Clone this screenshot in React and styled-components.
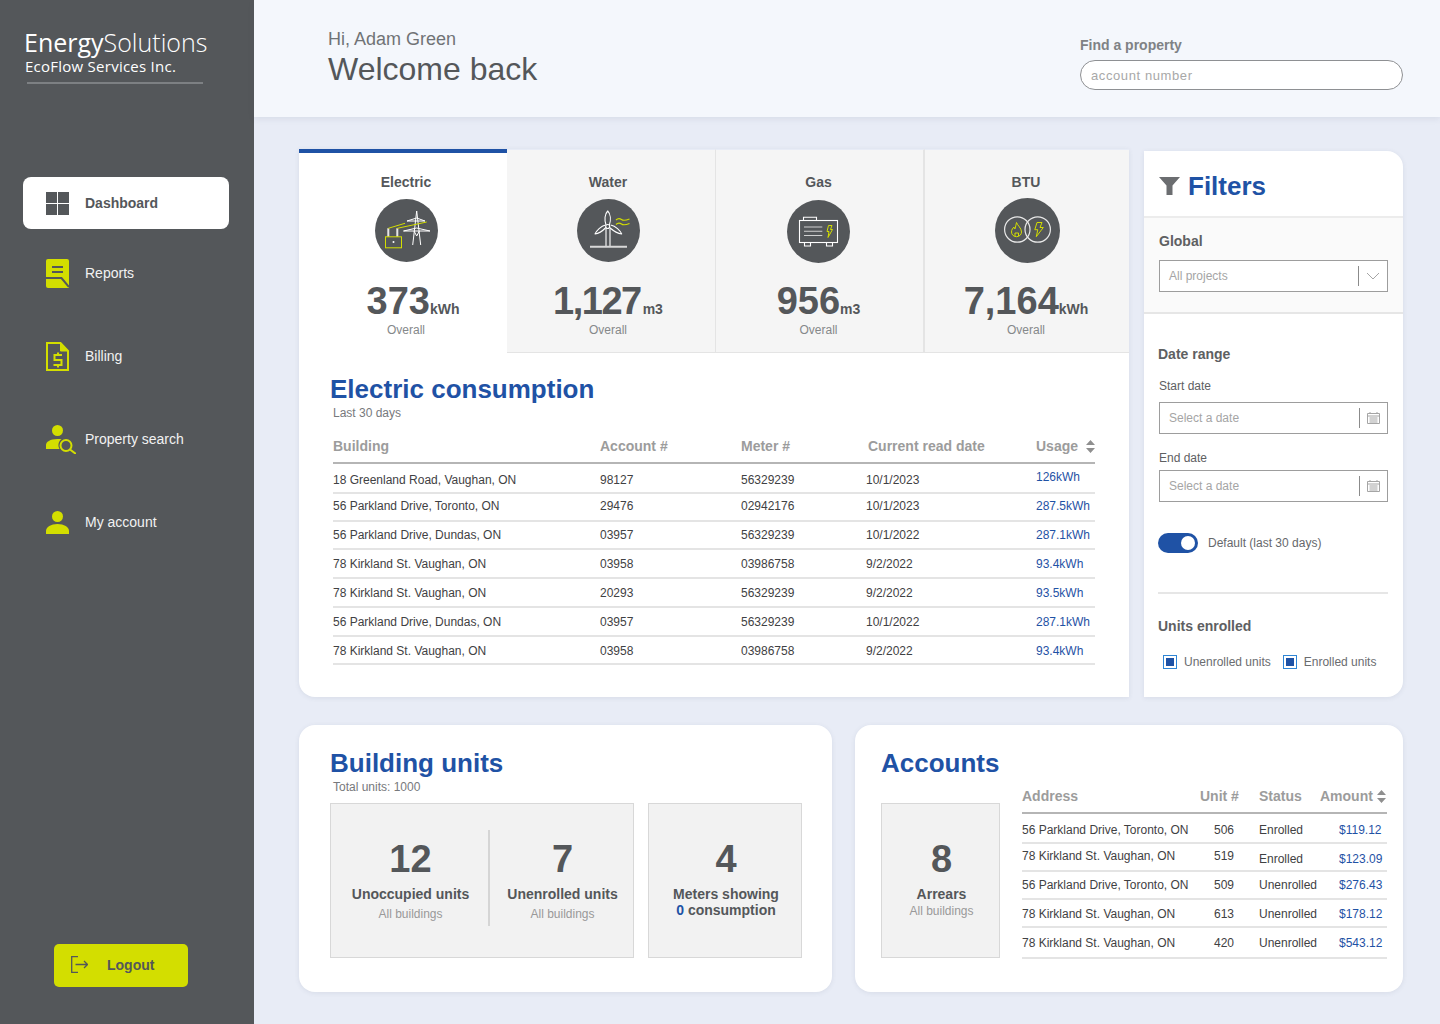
import React from 'react'
import styled, { createGlobalStyle } from 'styled-components'

const LIME = '#d3de00'
const SLATE = '#54575a'
const BLUE = '#1f52a5'

const Global = createGlobalStyle`
  html, body { margin: 0; padding: 0; }
  body { background: #e8ecf6; font-family: "Liberation Sans", Arial, sans-serif; color: ${SLATE}; }
  * { box-sizing: border-box; }
`

const Page = styled.div`
  display: flex;
  width: 1440px;
  height: 1024px;
  overflow: hidden;
`

const Sidebar = styled.aside`
  width: 254px;
  flex: none;
  background: ${SLATE};
  display: flex;
  flex-direction: column;
  padding: 27px 0 37px;
`

const Logo = styled.div`
  margin-left: 27px;
  width: 176px;
  font-family: "Open Sans", sans-serif;
  color: #fff;
  border-bottom: 2px solid #7d8083;
  height: 57px;
`

const LogoName = styled.div`
  font-size: 25px;
  line-height: 31px;
  font-weight: 300;
  white-space: nowrap;
  margin-left: -3px;
  b { font-weight: 500; }
`

const LogoSub = styled.div`
  font-size: 15px;
  letter-spacing: 0.25px;
  line-height: 17px;
  white-space: nowrap;
  margin-left: -2px;
`

const Nav = styled.nav`
  margin-top: 93px;
  display: flex;
  flex-direction: column;
`

const NavItem = styled.a`
  display: flex;
  align-items: center;
  margin-left: 23px;
  width: 206px;
  height: ${p => p.$h}px;
  padding-left: 23px;
  gap: ${p => p.$gap || 16}px;
  font-size: 14px;
  border-radius: 8px;
  color: ${p => (p.$active ? SLATE : '#f2f2f2')};
  font-weight: ${p => (p.$active ? 700 : 400)};
  background: ${p => (p.$active ? '#fff' : 'transparent')};
  margin-bottom: ${p => p.$after || 0}px;
  svg { flex: none; }
`

const Logout = styled.button`
  margin-top: auto;
  margin-left: 54px;
  width: 134px;
  height: 43px;
  border: 0;
  border-radius: 5px;
  background: ${LIME};
  color: ${SLATE};
  font: 700 14px "Liberation Sans", Arial, sans-serif;
  display: flex;
  align-items: center;
  gap: 19px;
  padding: 0 0 2px 17px;
`

const Content = styled.div`
  flex: 1;
  display: flex;
  flex-direction: column;
  min-width: 0;
`

const Header = styled.header`
  height: 117px;
  flex: none;
  background: #f4f7fc;
  box-shadow: 0 2px 6px rgba(70, 80, 110, 0.1);
  display: flex;
  justify-content: space-between;
  padding: 28px 37px 0 74px;
`

const Hello = styled.div`
  font-size: 18px;
  line-height: 22px;
  color: #707376;
`

const Welcome = styled.h1`
  margin: 0;
  font-size: 32px;
  line-height: 38px;
  font-weight: 400;
  color: ${SLATE};
`

const Finder = styled.div`
  width: 323px;
  padding-top: 9px;
`

const FinderLabel = styled.div`
  font-size: 14px;
  font-weight: 700;
  line-height: 17px;
  color: #7f8285;
  margin-bottom: 6px;
`

const FinderInput = styled.div`
  height: 30px;
  border: 1px solid #8e9093;
  border-radius: 15px;
  background: #fff;
  font-size: 13px;
  letter-spacing: 0.6px;
  line-height: 30px;
  padding-left: 10px;
  color: #a8a8a8;
`

const Main = styled.main`
  padding: 32px 37px 0 45px;
  display: flex;
  flex-direction: column;
  gap: 28px;
`

const TopRow = styled.div`
  display: flex;
  gap: 15px;
  height: 548px;
`

const Consumption = styled.section`
  width: 830px;
  background: #fff;
  border-radius: 0 0 0 16px;
  box-shadow: 0 1px 5px rgba(70, 80, 110, 0.1);
`

const Tabs = styled.div`
  display: flex;
  height: 204px;
`

const Tab = styled.div`
  width: ${p => p.$w}px;
  flex: none;
  height: 100%;
  background: ${p => (p.$active ? '#fff' : '#f5f5f5')};
  border-top: ${p => (p.$active ? `4px solid ${BLUE}` : '1px solid #e8ecf6')};
  border-right: ${p => p.$gap || 0}px solid #e4e4e4;
  border-bottom: ${p => (p.$active ? '0' : '1px solid #e4e4e4')};
  padding-top: ${p => (p.$active ? 20 : 23)}px;
  padding-left: ${p => p.$shift || 0}px;
  padding-right: ${p => p.$back || 0}px;
  display: flex;
  flex-direction: column;
  align-items: center;
`

const TabName = styled.div`
  font-size: 14px;
  line-height: 18px;
  font-weight: 700;
`

const TabIcon = styled.div`
  width: 66px;
  height: 66px;
  margin: ${p => p.$top || 6}px 0 ${p => 30 - (p.$top || 6)}px ${p => p.$nudge || 0}px;
  display: flex;
  align-items: center;
  justify-content: center;
`

const TabValue = styled.div`
  font-size: 38px;
  line-height: 28px;
  font-weight: 700;
  white-space: nowrap;
  letter-spacing: ${p => p.$tight || 0}px;
  margin-left: ${p => p.$nudge || 0}px;
  small { font-size: 14px; font-weight: 700; letter-spacing: 0; margin-left: ${p => p.$gap || 0}px; }
`

const Muted = styled.div`
  font-size: 12px;
  line-height: 14px;
  color: #85888a;
`

const Title = styled.h2`
  margin: 0;
  font-size: 26px;
  line-height: 30px;
  font-weight: 700;
  color: ${BLUE};
  white-space: nowrap;
`

const Usage = styled.div`
  padding: 21px 34px 0 31px;
`

const Sub = styled(Muted)`
  color: #77797c;
  margin-left: 3px;
  margin-top: 2px;
`

const Sheet = styled.div`
  margin: 14px 0 0 3px;
`

const HeadRow = styled.div`
  display: grid;
  grid-template-columns: ${p => p.$cols};
  height: 30px;
  padding-bottom: 4px;
  border-bottom: 2px solid #b5b5b5;
  align-items: center;
  font-size: 14px;
  font-weight: 700;
  color: #9c9c9c;
  white-space: nowrap;
`

const Row = styled.div`
  display: grid;
  grid-template-columns: ${p => p.$cols};
  height: ${p => p.$h}px;
  padding-top: ${p => p.$nudge > 0 ? p.$nudge : 0}px;
  padding-bottom: ${p => p.$nudge < 0 ? -p.$nudge : 0}px;
  border-bottom: 2px solid #e4e4e4;
  align-items: center;
  font-size: 12px;
  color: #3f4143;
  white-space: nowrap;
`

const Cell = styled.div`
  padding-left: ${p => p.$pad || 0}px;
  margin-top: ${p => p.$down || 0}px;
  margin-bottom: ${p => p.$up || 0}px;
  color: ${p => (p.$link ? BLUE : 'inherit')};
  display: flex;
  align-items: center;
  gap: ${p => p.$gap || 8}px;
`

const Filters = styled.aside`
  width: 259px;
  margin-top: 2px;
  background: #fff;
  border-radius: 0 16px 16px 0;
  box-shadow: 0 1px 5px rgba(70, 80, 110, 0.1);
  overflow: hidden;
`

const FilterHead = styled.div`
  height: 65px;
  display: flex;
  align-items: center;
  gap: 8px;
  padding: 4px 0 0 15px;
`

const GlobalBlock = styled.div`
  height: 98px;
  background: #fafafa;
  border-top: 2px solid #ececec;
  border-bottom: 2px solid #e6e6e6;
  padding: 15px 15px 0;
`

const Bold = styled.div`
  font-size: 14px;
  line-height: 17px;
  font-weight: 700;
  color: #5e6062;
`

const Field = styled.div`
  width: 229px;
  height: 32px;
  margin-top: ${p => p.$top || 0}px;
  border: 1px solid #9d9d9d;
  background: #fff;
  display: flex;
  align-items: center;
  padding-left: 9px;
  font-size: 12px;
  color: #a5a5a5;
  span { flex: 1; }
  i {
    width: 1px;
    height: 20px;
    background: #8b8b8b;
  }
  svg { margin: 0 7px; flex: none; }
`

const FilterBody = styled.div`
  padding: 32px 15px 0 14px;
`

const FieldLabel = styled.div`
  font-size: 12px;
  line-height: 14px;
  color: #5e6062;
  margin: ${p => p.$top}px 0 ${p => p.$after}px 1px;
`

const FieldBox = styled(Field)`
  margin-left: 1px;
`

const ToggleRow = styled.div`
  display: flex;
  align-items: center;
  gap: 10px;
  margin-top: 31px;
  font-size: 12px;
  color: #66686b;
`

const Toggle = styled.div`
  width: 40px;
  height: 20px;
  border-radius: 10px;
  background: ${BLUE};
  display: flex;
  justify-content: flex-end;
  align-items: center;
  padding-right: 3px;
  &::after {
    content: '';
    width: 14px;
    height: 14px;
    border-radius: 50%;
    background: #fff;
  }
`

const Rule = styled.div`
  height: 2px;
  background: #e6e6e6;
  margin: 39px 0 24px;
  width: 230px;
`

const Checks = styled.div`
  display: flex;
  gap: 12px;
  margin: 20px 0 0 5px;
`

const Check = styled.label`
  display: flex;
  align-items: center;
  gap: 7px;
  font-size: 12px;
  color: #6a6c6f;
  white-space: nowrap;
  margin-top: ${p => (p.$raised ? -1 : 0)}px;
  &::before {
    content: '';
    width: 12px;
    height: 12px;
    flex: none;
    border: 1px solid #2f86d6;
    background: ${BLUE};
    box-shadow: inset 0 0 0 2px #fff;
  }
`

const BottomRow = styled.div`
  display: flex;
  gap: 23px;
  height: 267px;
`

const Panel = styled.section`
  width: ${p => p.$w}px;
  background: #fff;
  border-radius: 16px;
  box-shadow: 0 1px 5px rgba(70, 80, 110, 0.1);
  padding: 23px ${p => p.$right}px 0 ${p => p.$left}px;
`

const Boxes = styled.div`
  display: flex;
  gap: 14px;
  margin-top: 9px;
`

const StatBox = styled.div`
  width: ${p => p.$w}px;
  height: 155px;
  flex: none;
  background: #f2f2f2;
  border: 1px solid #d8d8d8;
  display: flex;
  padding-top: 26px;
`

const Stat = styled.div`
  flex: ${p => (p.$split ? `0 0 ${p.$split}px` : 1)};
  display: flex;
  flex-direction: column;
  align-items: center;
  height: 96px;
  padding-left: 2px;
  border-right: ${p => (p.$split ? '2px solid #d5d5d5' : '0')};
  text-align: center;
`

const StatValue = styled.div`
  font-size: 38px;
  line-height: 44px;
  font-weight: 700;
  margin-top: 7px;
`

const StatName = styled.div`
  font-size: 14px;
  line-height: 16px;
  font-weight: 700;
  margin-top: 5px;
  white-space: nowrap;
  b { color: ${BLUE}; }
`

const StatHint = styled(Muted)`
  color: #999;
  margin-top: ${p => p.$top || 5}px;
`

const AccountsWrap = styled.div`
  display: flex;
  gap: 22px;
  margin-top: 6px;
`

const AccountsBox = styled(StatBox)`
  margin-top: 19px;
`

const AccountsTable = styled.div`
  width: 365px;
`

const Sort = () => (
  <svg width="9" height="13" viewBox="0 0 9 13"><path d="M4.5 0 9 5H0zM0 8h9l-4.5 5z" fill="#8f8f8f" /></svg>
)

const Dashboard = () => (
  <svg width="23" height="23" viewBox="0 0 23 23" fill={SLATE}>
    <rect width="11" height="11" /><rect x="12" width="11" height="11" />
    <rect y="12" width="11" height="11" /><rect x="12" y="12" width="11" height="11" />
  </svg>
)

const Reports = () => (
  <svg width="23" height="29" viewBox="0 0 23 29">
    <path d="M2 0h19a2 2 0 0 1 2 2v27H2a2 2 0 0 1-2-2V2a2 2 0 0 1 2-2z" fill={LIME} />
    <path d="M6 8h11M6 13h11" stroke={SLATE} strokeWidth="2" />
    <path d="M0 19h15.5L23 28" stroke={SLATE} strokeWidth="2" fill="none" />
  </svg>
)

const Billing = () => (
  <svg width="23" height="29" viewBox="0 0 23 29" fill="none" stroke={LIME} strokeWidth="2">
    <path d="M1 1h13.500L22 9v19H1z" />
    <path d="M14.500 1 22 9h-7.500z" fill={LIME} strokeWidth="1" />
    <path d="M16 13H8.500v5h7v5H7.500M12 10.500V13M12 23v2.500" />
  </svg>
)

const PropertySearch = () => (
  <svg width="30" height="29" viewBox="0 0 30 29" fill={LIME}>
    <circle cx="11.500" cy="5.500" r="5.500" />
    <path d="M0 24v-4c0-3 4-6 11.500-6 1.500 0 3 .1 4 .3-3 2-4 6-2 9.700z" />
    <circle cx="20" cy="20.500" r="5.500" fill="none" stroke={LIME} strokeWidth="2" />
    <path d="m24 24.500 6 4.500" stroke={LIME} strokeWidth="2" />
  </svg>
)

const Account = () => (
  <svg width="23" height="23" viewBox="0 0 23 23" fill={LIME}>
    <circle cx="11.500" cy="5.500" r="5.500" />
    <path d="M0 23v-3c0-4 5-7 11.500-7S23 16 23 20v3z" />
  </svg>
)

const LogoutIcon = () => (
  <svg width="17" height="17" viewBox="0 0 17 17" fill="none" stroke={SLATE} strokeWidth="1.300">
    <path d="M7 .700H.700v15.600H7M4.500 8.500h12M13 5l3.500 3.500L13 12" />
  </svg>
)

const Funnel = () => (
  <svg width="21" height="18" viewBox="0 0 21 18"><path d="M0 0h21l-7.500 8.500V18h-6V8.500z" fill="#6b6d70" /></svg>
)

const Chevron = () => (
  <svg width="14" height="8" viewBox="0 0 14 8" fill="none" stroke="#a5a5a5"><path d="M1 1l6 6 6-6" /></svg>
)

const Calendar = () => (
  <svg width="13" height="12" viewBox="0 0 13 12" fill="none" stroke="#a5a5a5">
    <path d="M.500 1.500h12v10H.500zM.500 4h12M3 0v2M10 0v2M2.500 6h8M2.500 8h8M2.500 10h8" />
  </svg>
)

const Disc = ({ size = 63, children }) => (
  <svg width={size} height={size} viewBox={`0 0 ${size} ${size}`} fill="none">
    <circle cx={size / 2} cy={size / 2} r={size / 2} fill={SLATE} />
    {children}
  </svg>
)

const ElectricIcon = () => (
  <Disc>
    <g stroke="#fff" strokeWidth="1">
      <path d="M41.700 12 37.700 46M41.700 12l4 34" />
      <path d="M32 22h18l-8.300-3zM28.500 32H55l-13.300-3z" />
      <path d="M39 32l2.700 5 2.700-5" />
    </g>
    <path d="M13.300 29.300v8.400M22.300 29.300v8.400" stroke="#e6e6e6" strokeWidth="2" />
    <g stroke={LIME} strokeWidth="1">
      <path d="M13.300 29.300 30 24.300M22.300 29.300 51.700 23" />
      <rect x="10.500" y="37.800" width="16" height="11" />
    </g>
    <circle cx="18.500" cy="43" r="1" fill="#fff" />
  </Disc>
)

const WaterIcon = () => (
  <Disc>
    <g stroke="#fff" strokeWidth="1.100" strokeLinejoin="round">
      <path d="M29 26c-1.800-5-1.300-11 1.700-14 3 3 3.300 9 1.700 14" />
      <path d="M29 28.500c-3.500 3.500-7 6-11 6.500 1.500-3.500 6-8 10.500-9" />
      <path d="M32.500 28.500c3.500 3 8 6 12.200 6.500-1.500-3.500-6-8-11-9" />
      <circle cx="30.700" cy="27.500" r="2" />
      <path d="M29 30v17M33 30v17" />
    </g>
    <path d="M13 47.700h37" stroke="#d8d8d8" strokeWidth="2" />
    <path d="M39 21c2-2 3.500-2 5.500-.500s4 1 8-.500M39 25.500c2-2 3.500-2 5.500-.500s4 1 8-.500" stroke={LIME} strokeWidth="1.200" />
  </Disc>
)

const GasIcon = () => (
  <Disc>
    <g stroke="#fff" strokeWidth="1.100">
      <rect x="12.500" y="20.500" width="38" height="22" />
      <path d="M16.500 20.500V17.200h13v3.300M17.500 42.500V46h6v-3.500M39.500 42.500V46h6v-3.500" />
      <path d="M17 27h18.300M17 31.300h18.300M17 35.500h18.300" stroke="#d0d0d0" />
    </g>
    <path d="M41.500 25.500h3.500l-1.500 4h2L41 37.500l1-6h-2z" stroke={LIME} />
  </Disc>
)

const BtuIcon = () => (
  <Disc size={65}>
    <g stroke="#e8e8e8" strokeWidth="1.200">
      <circle cx="22.300" cy="31.500" r="12.700" />
      <circle cx="42.700" cy="31.500" r="12.700" />
    </g>
    <path d="M21.500 24.500c1 3 5 5.500 5 9.500 0 2.500-2 4.700-5 4.700s-5-2.200-5-4.700c0-2.500 1.500-4 2.500-5 0 1 .300 1.800 1 2 .500-2 1-4.500 1.500-6.500z" stroke={LIME} />
    <path d="M20 38.500v-3.500h3.500v3" stroke={LIME} />
    <path d="M42 24.500h5l-2 5h3.300l-7 9.200 1.500-7h-3z" stroke={LIME} />
  </Disc>
)

const usageCols = '267px 141px 125px 170px 1fr'
const accountCols = '178px 59px 61px 1fr'

// last two fields: row height, shift of the row's text
const usageRows = [
  ['18 Greenland Road, Vaughan, ON', '98127', '56329239', '10/1/2023', '126kWh', 30, 4],
  ['56 Parkland Drive, Toronto, ON', '29476', '02942176', '10/1/2023', '287.5kWh', 28, -2],
  ['56 Parkland Drive, Dundas, ON', '03957', '56329239', '10/1/2022', '287.1kWh', 28, 0],
  ['78 Kirkland St. Vaughan, ON', '03958', '03986758', '9/2/2022', '93.4kWh', 29, 0],
  ['78 Kirkland St. Vaughan, ON', '20293', '56329239', '9/2/2022', '93.5kWh', 29, 0],
  ['56 Parkland Drive, Dundas, ON', '03957', '56329239', '10/1/2022', '287.1kWh', 29, 0],
  ['78 Kirkland St. Vaughan, ON', '03958', '03986758', '9/2/2022', '93.4kWh', 28, 2],
]

const accountRows = [
  ['56 Parkland Drive, Toronto, ON', '506', 'Enrolled', '$119.12', 30, 4],
  ['78 Kirkland St. Vaughan, ON', '519', 'Enrolled', '$123.09', 28, 0],
  ['56 Parkland Drive, Toronto, ON', '509', 'Unenrolled', '$276.43', 28, 0],
  ['78 Kirkland St. Vaughan, ON', '613', 'Unenrolled', '$178.12', 28, 2],
  ['78 Kirkland St. Vaughan, ON', '420', 'Unenrolled', '$543.12', 31, 0],
]

export default function App() {
  return (
    <Page>
      <Global />
      <Sidebar>
        <Logo>
          <LogoName><b>Energy</b>Solutions</LogoName>
          <LogoSub>EcoFlow Services Inc.</LogoSub>
        </Logo>
        <Nav>
          <NavItem $active $h={52} $after={22}><Dashboard />Dashboard</NavItem>
          <NavItem $h={44} $after={39}><Reports />Reports</NavItem>
          <NavItem $h={44} $after={39}><Billing />Billing</NavItem>
          <NavItem $h={44} $after={39} $gap={9}><PropertySearch />Property search</NavItem>
          <NavItem $h={44}><Account />My account</NavItem>
        </Nav>
        <Logout><LogoutIcon />Logout</Logout>
      </Sidebar>

      <Content>
        <Header>
          <div>
            <Hello>Hi, Adam Green</Hello>
            <Welcome>Welcome back</Welcome>
          </div>
          <Finder>
            <FinderLabel>Find a property</FinderLabel>
            <FinderInput>account number</FinderInput>
          </Finder>
        </Header>

        <Main>
          <TopRow>
            <Consumption>
              <Tabs>
                <Tab $active $w={208} $shift={6}>
                  <TabName>Electric</TabName>
                  <TabIcon><ElectricIcon /></TabIcon>
                  <TabValue $nudge={14}>373<small>kWh</small></TabValue>
                  <Muted>Overall</Muted>
                </Tab>
                <Tab $w={209} $gap={1} $back={6}>
                  <TabName>Water</TabName>
                  <TabIcon><WaterIcon /></TabIcon>
                  <TabValue $tight={-1.5} $gap={2}>1,127<small>m3</small></TabValue>
                  <Muted>Overall</Muted>
                </Tab>
                <Tab $w={209} $gap={2} $back={2}>
                  <TabName>Gas</TabName>
                  <TabIcon $top={7}><GasIcon /></TabIcon>
                  <TabValue>956<small>m3</small></TabValue>
                  <Muted>Overall</Muted>
                </Tab>
                <Tab $w={204} $back={2}>
                  <TabName>BTU</TabName>
                  <TabIcon $nudge={3}><BtuIcon /></TabIcon>
                  <TabValue>7,164<small>kWh</small></TabValue>
                  <Muted>Overall</Muted>
                </Tab>
              </Tabs>
              <Usage>
                <Title>Electric consumption</Title>
                <Sub>Last 30 days</Sub>
                <Sheet>
                  <HeadRow $cols={usageCols}>
                    <Cell>Building</Cell>
                    <Cell>Account #</Cell>
                    <Cell>Meter #</Cell>
                    <Cell $pad={2}>Current read date</Cell>
                    <Cell>Usage <Sort /></Cell>
                  </HeadRow>
                  {usageRows.map((r, i) => (
                    <Row key={i} $cols={usageCols} $h={r[5]} $nudge={r[6]}>
                      <Cell>{r[0]}</Cell>
                      <Cell>{r[1]}</Cell>
                      <Cell>{r[2]}</Cell>
                      <Cell>{r[3]}</Cell>
                      <Cell $link $up={i === 0 ? 6 : 0}>{r[4]}</Cell>
                    </Row>
                  ))}
                </Sheet>
              </Usage>
            </Consumption>

            <Filters>
              <FilterHead><Funnel /><Title>Filters</Title></FilterHead>
              <GlobalBlock>
                <Bold>Global</Bold>
                <Field $top={10}>
                  <span>All projects</span><i /><Chevron />
                </Field>
              </GlobalBlock>
              <FilterBody>
                <Bold>Date range</Bold>
                <FieldLabel $top={16} $after={9}>Start date</FieldLabel>
                <FieldBox><span>Select a date</span><i /><Calendar /></FieldBox>
                <FieldLabel $top={17} $after={5}>End date</FieldLabel>
                <FieldBox><span>Select a date</span><i /><Calendar /></FieldBox>
                <ToggleRow><Toggle />Default (last 30 days)</ToggleRow>
                <Rule />
                <Bold>Units enrolled</Bold>
                <Checks>
                  <Check>Unenrolled units</Check>
                  <Check $raised>Enrolled units</Check>
                </Checks>
              </FilterBody>
            </Filters>
          </TopRow>

          <BottomRow>
            <Panel $w={533} $left={31} $right={30}>
              <Title>Building units</Title>
              <Sub>Total units: 1000</Sub>
              <Boxes>
                <StatBox $w={304}>
                  <Stat $split={159}>
                    <StatValue>12</StatValue>
                    <StatName>Unoccupied units</StatName>
                    <StatHint>All buildings</StatHint>
                  </Stat>
                  <Stat>
                    <StatValue>7</StatValue>
                    <StatName>Unenrolled units</StatName>
                    <StatHint>All buildings</StatHint>
                  </Stat>
                </StatBox>
                <StatBox $w={154}>
                  <Stat>
                    <StatValue>4</StatValue>
                    <StatName>Meters showing<br /><b>0</b> consumption</StatName>
                  </Stat>
                </StatBox>
              </Boxes>
            </Panel>

            <Panel $w={548} $left={26} $right={16}>
              <Title>Accounts</Title>
              <AccountsWrap>
                <AccountsBox $w={119}>
                  <Stat>
                    <StatValue>8</StatValue>
                    <StatName>Arrears</StatName>
                    <StatHint $top={2}>All buildings</StatHint>
                  </Stat>
                </AccountsBox>
                <AccountsTable>
                  <HeadRow $cols={accountCols}>
                    <Cell>Address</Cell>
                    <Cell>Unit #</Cell>
                    <Cell>Status</Cell>
                    <Cell $gap={4}>Amount<Sort /></Cell>
                  </HeadRow>
                  {accountRows.map((r, i) => (
                    <Row key={i} $cols={accountCols} $h={r[4]} $nudge={r[5]}>
                      <Cell $up={i === 1 ? 3 : 0}>{r[0]}</Cell>
                      <Cell $pad={14} $up={i === 1 ? 3 : 0}>{r[1]}</Cell>
                      <Cell $down={i === 1 ? 4 : 0}>{r[2]}</Cell>
                      <Cell $link $pad={19} $down={i === 1 ? 4 : 0}>{r[3]}</Cell>
                    </Row>
                  ))}
                </AccountsTable>
              </AccountsWrap>
            </Panel>
          </BottomRow>
        </Main>
      </Content>
    </Page>
  )
}
